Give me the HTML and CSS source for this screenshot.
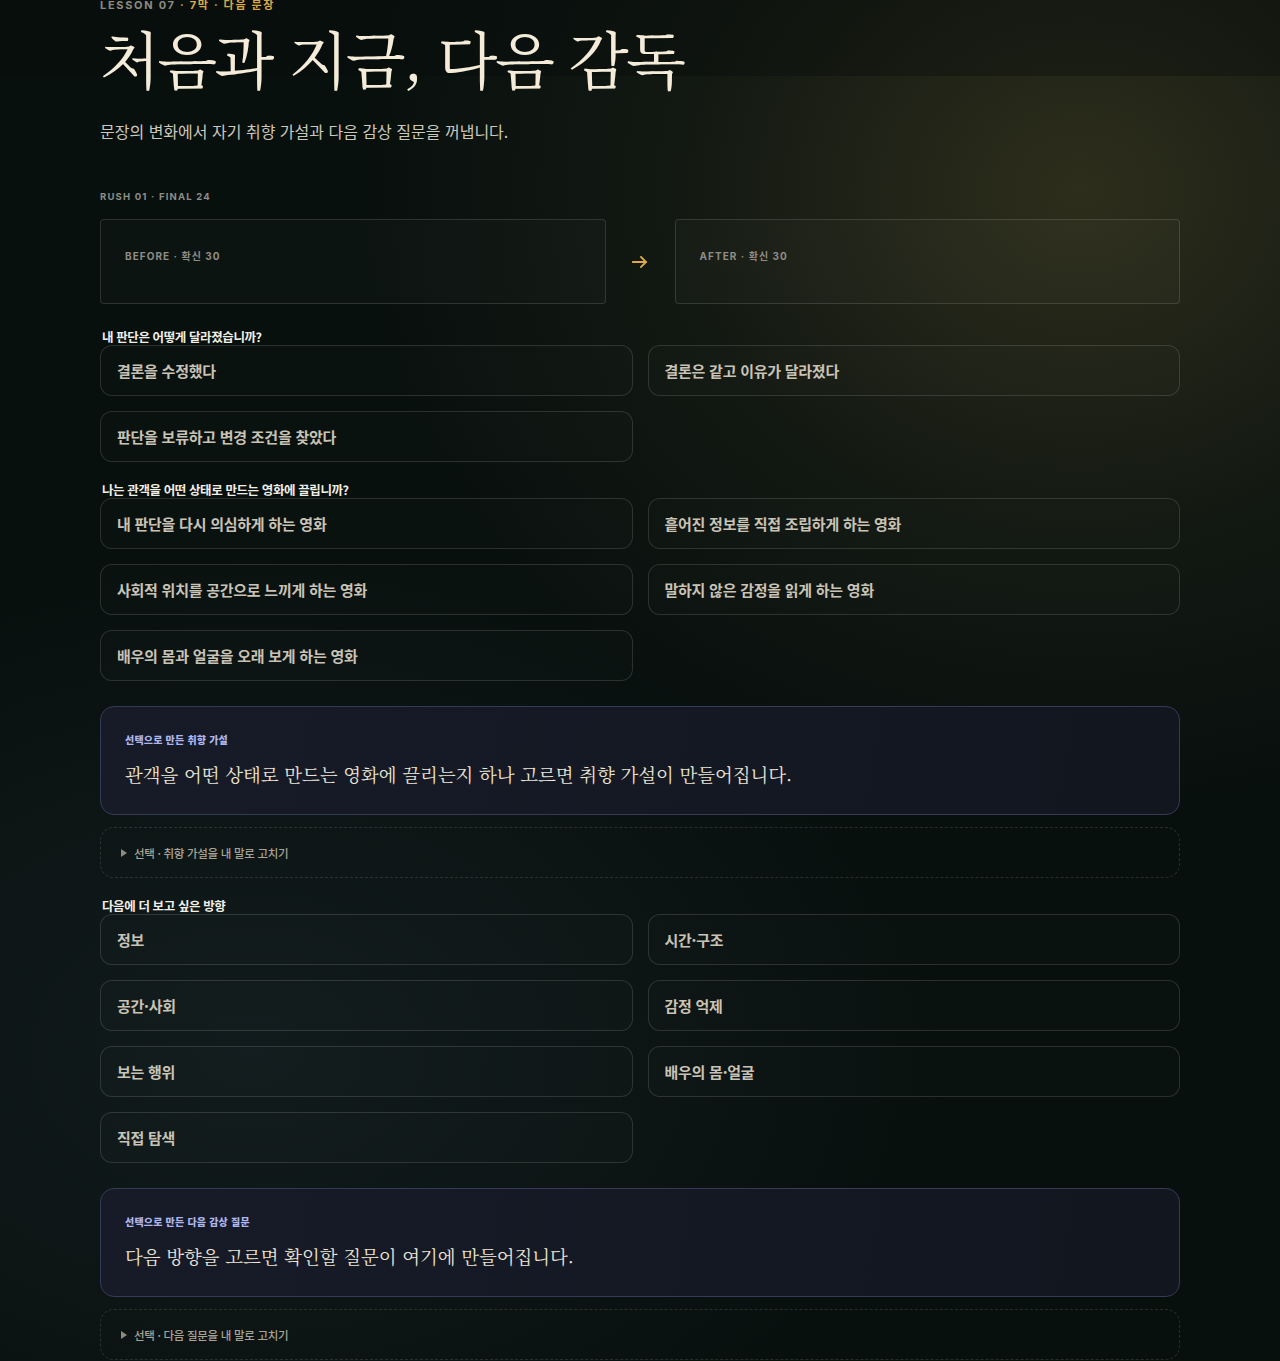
FILE: index.html
```html
<!DOCTYPE html>
<html lang="ko">
<head>
<meta charset="utf-8">
<title>처음과 지금, 다음 감독</title>
<link rel="stylesheet" href="styles.css">
</head>
<body>
<main class="page">
  <header class="hero">
    <p class="eyebrow">LESSON 07 <span class="accent">· 7막 · 다음 문장</span></p>
    <h1 class="title">처음과 지금, 다음 감독</h1>
    <p class="lede">문장의 변화에서 자기 취향 가설과 다음 감상 질문을 꺼냅니다.</p>
  </header>

  <section class="compare">
    <p class="kicker">RUSH 01 · FINAL 24</p>
    <div class="compare-row">
      <div class="sentence-box"><p class="box-label">BEFORE · 확신 30</p></div>
      <div class="arrow">
        <svg width="18" height="18" viewBox="0 0 18 18" fill="none" stroke="#e0a84a" stroke-width="1.8" stroke-linecap="square"><path d="M2 9h13M10 4l5 5-5 5"/></svg>
      </div>
      <div class="sentence-box"><p class="box-label">AFTER · 확신 30</p></div>
    </div>
  </section>

  <section class="question first">
    <p class="q-label">내 판단은 어떻게 달라졌습니까?</p>
    <div class="options">
      <button class="option">결론을 수정했다</button>
      <button class="option">결론은 같고 이유가 달라졌다</button>
      <button class="option">판단을 보류하고 변경 조건을 찾았다</button>
    </div>
  </section>

  <section class="question">
    <p class="q-label">나는 관객을 어떤 상태로 만드는 영화에 끌립니까?</p>
    <div class="options">
      <button class="option">내 판단을 다시 의심하게 하는 영화</button>
      <button class="option">흩어진 정보를 직접 조립하게 하는 영화</button>
      <button class="option">사회적 위치를 공간으로 느끼게 하는 영화</button>
      <button class="option">말하지 않은 감정을 읽게 하는 영화</button>
      <button class="option">배우의 몸과 얼굴을 오래 보게 하는 영화</button>
    </div>
  </section>

  <div class="result">
    <p class="result-label">선택으로 만든 취향 가설</p>
    <p class="result-text">관객을 어떤 상태로 만드는 영화에 끌리는지 하나 고르면 취향 가설이 만들어집니다.</p>
  </div>
  <details class="edit">
    <summary>선택 · 취향 가설을 내 말로 고치기</summary>
  </details>

  <section class="question">
    <p class="q-label">다음에 더 보고 싶은 방향</p>
    <div class="options">
      <button class="option">정보</button>
      <button class="option">시간·구조</button>
      <button class="option">공간·사회</button>
      <button class="option">감정 억제</button>
      <button class="option">보는 행위</button>
      <button class="option">배우의 몸·얼굴</button>
      <button class="option">직접 탐색</button>
    </div>
  </section>

  <div class="result">
    <p class="result-label">선택으로 만든 다음 감상 질문</p>
    <p class="result-text">다음 방향을 고르면 확인할 질문이 여기에 만들어집니다.</p>
  </div>
  <details class="edit">
    <summary>선택 · 다음 질문을 내 말로 고치기</summary>
  </details>
</main>
</body>
</html>
```

FILE: styles.css
```css
* { box-sizing: border-box; }

html, body {
  margin: 0;
  padding: 0;
}

body {
  min-height: 100vh;
  font-family: "Noto Sans CJK KR", "Noto Sans", sans-serif;
  color: #cfc9bc;
  background:
    linear-gradient(to bottom, rgba(6, 10, 9, 0.35) 0, rgba(6, 10, 9, 0.35) 76px, transparent 76px),
    radial-gradient(ellipse 720px 620px at 1080px 190px, rgba(58, 56, 32, 0.75), rgba(40, 40, 26, 0.35) 55%, transparent 100%),
    radial-gradient(ellipse 700px 500px at 250px 1050px, rgba(26, 36, 40, 0.55), transparent 100%),
    #08100e;
}

.page {
  width: 1080px;
  margin: 0 auto;
  padding-bottom: 40px;
}

p { margin: 0; }

/* hero */
.eyebrow {
  font-family: "Inter", "Noto Sans CJK KR", sans-serif;
  font-size: 11px;
  line-height: 11px;
  font-weight: 700;
  letter-spacing: 1.7px;
  color: #8b8a82;
}
.eyebrow .accent { color: #d9a84a; }

.title {
  margin: 11px 0 0;
  font-family: "UnPilgi", "Noto Serif CJK KR", "Noto Serif KR", serif;
  font-size: 62px;
  line-height: 72px;
  font-weight: 400;
  color: #f4ecd8;
  letter-spacing: -2.6px;
}

.lede {
  margin-top: 25px;
  font-size: 16px;
  line-height: 24px;
  font-weight: 400;
  color: #cdc8bc;
}

/* compare */
.compare { margin-top: 47px; }

.kicker {
  font-family: "Inter", "Noto Sans CJK KR", sans-serif;
  font-size: 9.5px;
  line-height: 14px;
  font-weight: 700;
  letter-spacing: 1.2px;
  color: #8e8d86;
}

.compare-row {
  margin-top: 15px;
  display: grid;
  grid-template-columns: 1fr 69px 1fr;
  align-items: stretch;
}

.sentence-box {
  height: 85px;
  border: 1px solid rgba(255, 255, 255, 0.13);
  border-radius: 4px;
  background: rgba(255, 255, 255, 0.018);
  padding: 29px 24px;
}

.box-label {
  font-family: "Inter", "Noto Sans CJK KR", sans-serif;
  font-size: 10px;
  line-height: 14px;
  font-weight: 700;
  letter-spacing: 1.05px;
  color: #8f8d86;
}

.arrow {
  display: flex;
  align-items: center;
  justify-content: center;
}

/* questions */
.question { margin-top: 20px; }
.question.first { margin-top: 25px; }

.q-label {
  font-size: 12.5px;
  line-height: 16px;
  font-weight: 700;
  letter-spacing: -0.4px;
  color: #f1eee6;
  padding-left: 2px;
}

.options {
  display: grid;
  grid-template-columns: 1fr 1fr;
  gap: 15px;
}

.option {
  height: 51px;
  padding: 0 16px;
  text-align: left;
  font-family: "Noto Sans CJK KR", "Noto Sans", sans-serif;
  font-size: 15px;
  font-weight: 700;
  letter-spacing: -0.25px;
  color: #c9c3b6;
  background: rgba(255, 255, 255, 0.012);
  border: 1px solid rgba(255, 255, 255, 0.13);
  border-radius: 12px;
}

/* result cards */
.result {
  margin-top: 25px;
  border: 1px solid #353b56;
  border-radius: 14px;
  background: linear-gradient(100deg, #171b28 0%, #141823 60%, #12161f 100%);
  padding: 26px 24px 25px;
}

.result-label {
  font-size: 10px;
  line-height: 14px;
  font-weight: 800;
  letter-spacing: 0.2px;
  color: #aeb6ee;
}

.result-text {
  margin-top: 12px;
  font-family: "UnBatang", "Noto Serif CJK KR", "Noto Serif KR", serif;
  font-size: 18.4px;
  line-height: 30px;
  color: #ede6d6;
}

.edit {
  margin-top: 12px;
  border: 1px dashed rgba(255, 255, 255, 0.12);
  border-radius: 14px;
  height: 51px;
}

.edit summary {
  list-style: none;
  display: flex;
  align-items: center;
  height: 49px;
  padding-left: 20px;
  font-size: 11.5px;
  font-weight: 500;
  letter-spacing: -0.3px;
  color: #a8a398;
  cursor: pointer;
}
.edit summary::-webkit-details-marker { display: none; }
.edit summary::before {
  content: "";
  width: 0;
  height: 0;
  border-left: 6px solid #8f8b83;
  border-top: 4px solid transparent;
  border-bottom: 4px solid transparent;
  margin-right: 7px;
}
```
